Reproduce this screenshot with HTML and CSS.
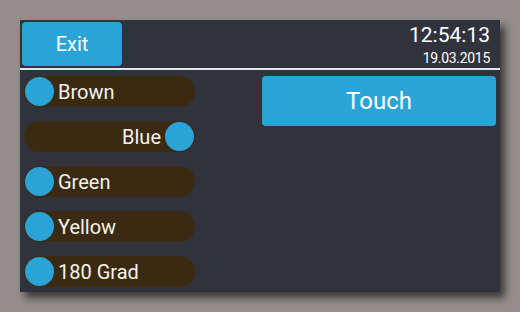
FILE: index.html
```html
<!DOCTYPE html>
<html lang="de">
<head>
    <meta charset="UTF-8">
    <title>Touch Panel</title>
    <link rel="stylesheet" href="styles.css">
</head>
<body>

<div class="panel">
    <div class="panel_head">
        <button class="btn btn_exit">Exit</button>
        <div class="clock">
            <p class="clock_time">12:54:13</p>
            <p class="clock_date">19.03.2015</p>
        </div>
    </div>

    <div class="panel_body">
        <div class="switches">
            <div class="switch"><span class="knob"></span><span class="switch_label">Brown</span></div>
            <div class="switch on"><span class="switch_label">Blue</span><span class="knob"></span></div>
            <div class="switch"><span class="knob"></span><span class="switch_label">Green</span></div>
            <div class="switch"><span class="knob"></span><span class="switch_label">Yellow</span></div>
            <div class="switch"><span class="knob"></span><span class="switch_label">180 Grad</span></div>
        </div>

        <div class="actions">
            <button class="btn btn_touch">Touch</button>
        </div>
    </div>
</div>

</body>
</html>
```

FILE: styles.css
```css
*{
    margin: 0px;
    padding: 0px;
    box-sizing: border-box;
}
body{
    background-color: #948f8d;
    padding: 20px;
    font-family: Roboto, "Liberation Sans", sans-serif;
    color: #ffffff;
}

.panel{
    width: 480px;
    height: 272px;
    background-color: #30333b;
    box-shadow: 5px 6px 8px rgba(0, 0, 0, 0.6);
}

.panel_head{
    display: flex;
    justify-content: space-between;
    height: 50px;
    padding: 2px 10px 2px 2px;
    /*Trennlinie unter dem Kopf*/
    border-bottom: 2px solid #e4e4e4;
}

.btn{
    border: none;
    border-radius: 4px;
    background-color: #2aa3d6;
    color: #ffffff;
    font-family: Roboto, "Liberation Sans", sans-serif;
}
.btn_exit{
    width: 100px;
    height: 44px;
    font-size: 20px;
}

.clock{
    text-align: right;
    padding-top: 2px;
}
.clock_time{
    font-size: 21px;
    line-height: 22px;
}
.clock_date{
    font-size: 14px;
    line-height: 18px;
    margin-top: 3px;
    letter-spacing: -0.3px;
}

.panel_body{
    display: flex;
    justify-content: space-between;
    padding: 6px 4px 0px 4px;
}

.switches{
    display: flex;
    flex-direction: column;
    gap: 14px;
}
.switch{
    display: flex;
    align-items: center;
    gap: 4px;
    width: 171px;
    height: 31px;
    padding: 0px 1px;
    border-radius: 16px;
    background-color: #3a2a11;
}
.switch.on{
    justify-content: flex-end;
}
.knob{
    width: 29px;
    height: 29px;
    border-radius: 50%;
    background-color: #2aa3d6;
}
.switch_label{
    font-size: 20px;
    color: #f6f3ec;
}

.btn_touch{
    width: 234px;
    height: 50px;
    font-size: 24px;
}
```
